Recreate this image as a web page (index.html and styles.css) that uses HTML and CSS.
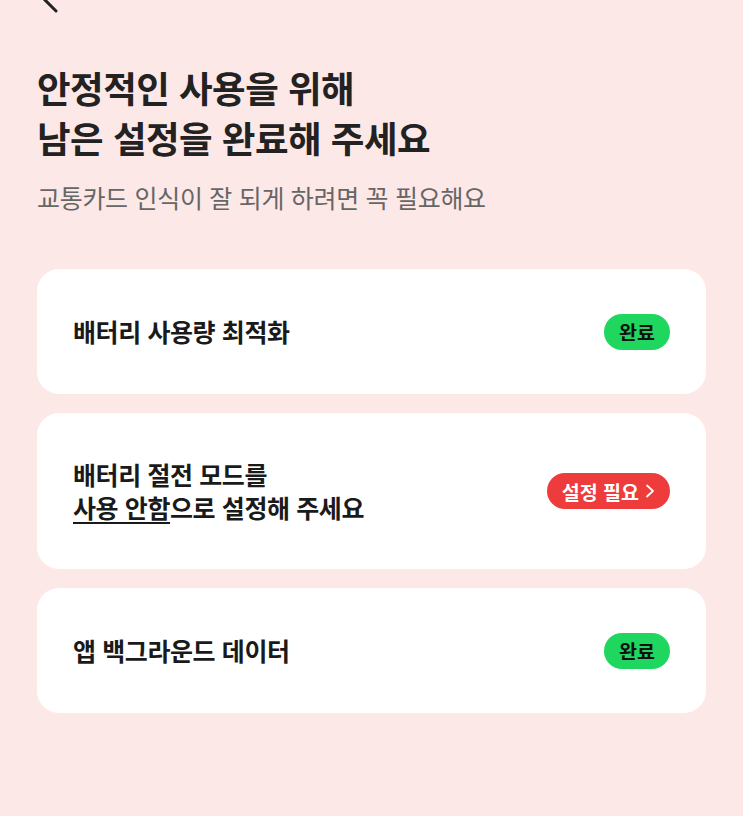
FILE: index.html
```html
<!DOCTYPE html>
<html lang="ko">
<head>
    <meta charset="UTF-8">
    <meta name="viewport" content="width=device-width, initial-scale=1.0">
    <title>설정</title>
    <link rel="stylesheet" href="styles.css">
</head>
<body>
    <div class="topbar">
        <svg class="back" width="30" height="40" viewBox="0 0 30 40">
            <path d="M22 4 L6 20 L22 36" fill="none" stroke="#222" stroke-width="3" stroke-linecap="round" stroke-linejoin="round"/>
        </svg>
    </div>
    <main class="page">
        <h1 class="title">안정적인 사용을 위해<br>남은 설정을 완료해 주세요</h1>
        <p class="subtitle">교통카드 인식이 잘 되게 하려면 꼭 필요해요</p>
        <div class="cards">
            <div class="card">
                <div class="card-text">배터리 사용량 최적화</div>
                <span class="badge done">완료</span>
            </div>
            <div class="card tall">
                <div class="card-text">배터리 절전 모드를<br><u>사용 안함</u>으로 설정해 주세요</div>
                <span class="badge need">설정 필요
                    <svg width="10" height="14" viewBox="0 0 10 14"><path d="M2 1.5 L8 7 L2 12.5" fill="none" stroke="#fff" stroke-width="1.8" stroke-linecap="round" stroke-linejoin="round"/></svg>
                </span>
            </div>
            <div class="card">
                <div class="card-text">앱 백그라운드 데이터</div>
                <span class="badge done">완료</span>
            </div>
        </div>
    </main>
</body>
</html>
```

FILE: styles.css
```css
body { margin: 0; padding: 0; background-color: #fde8e8; color: #222; font-family: "Noto Sans CJK KR", "Noto Sans", sans-serif; width: 743px; height: 816px; overflow: hidden; }
.topbar { height: 40px; padding-left: 34px; }
.back { display: block; margin-top: -25px; }
.page { padding: 48px 37px 0 37px; }
.title { margin: 0; font-size: 36.5px; line-height: 50px; font-weight: 700; letter-spacing: -0.5px; color: #222; }
.subtitle { margin: 17px 0 0 0; font-size: 25px; line-height: 34px; color: #666; letter-spacing: -0.3px; }
.cards { display: flex; flex-direction: column; gap: 19px; margin-top: 55px; }
.card { display: flex; align-items: center; justify-content: space-between; height: 125px; padding: 0 36px; background-color: #fff; border-radius: 22px; }
.card.tall { height: 156px; }
.card-text { font-size: 25px; line-height: 33px; font-weight: 700; color: #1a1a1a; letter-spacing: -0.4px; }
.card-text u { text-decoration-thickness: 2px; text-underline-offset: 4px; }
.badge { display: inline-flex; align-items: center; gap: 6px; height: 36px; padding: 0 15px; border-radius: 18px; font-size: 19.5px; font-weight: 700; }
.badge.done { background-color: #1fd65f; color: #111; }
.badge.need { background-color: #ee3b3b; color: #fff; }
```
